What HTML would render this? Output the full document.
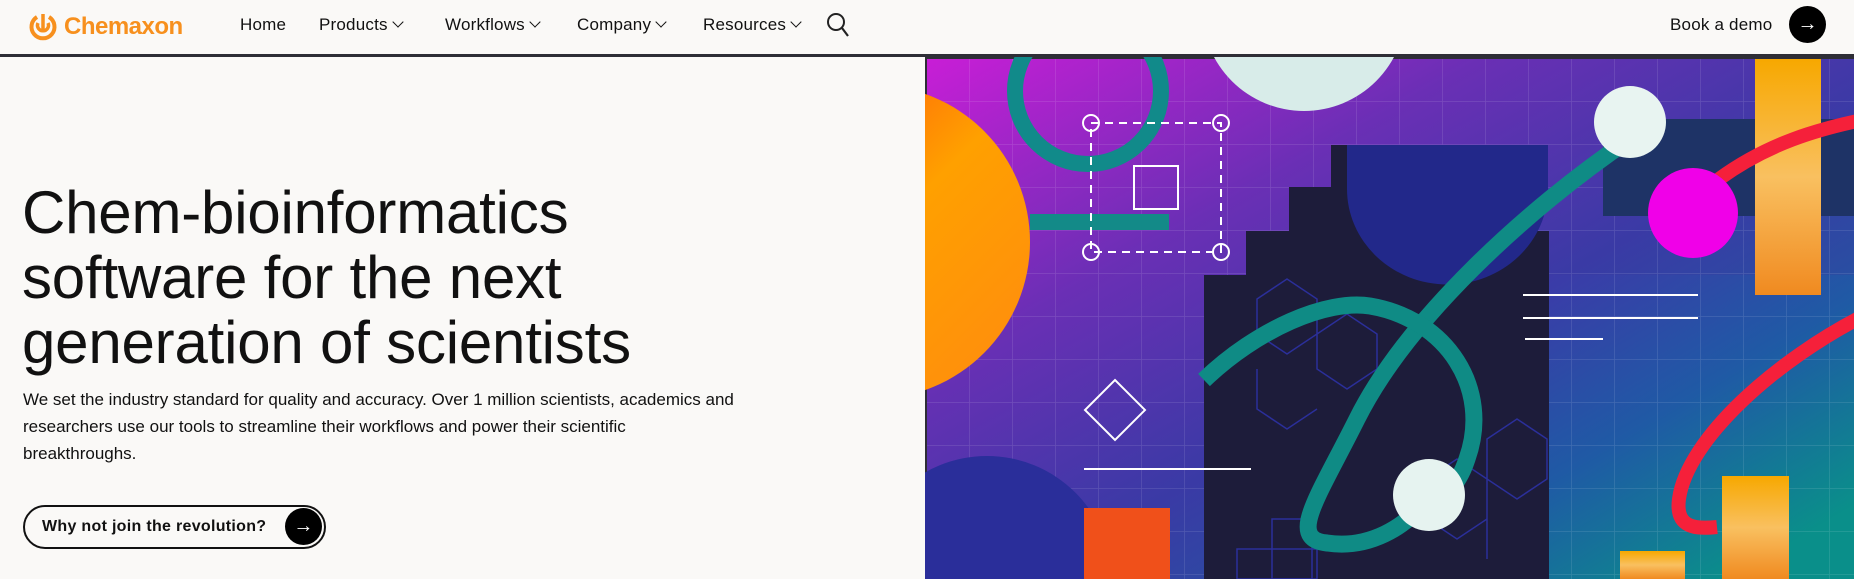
<!DOCTYPE html>
<html><head><meta charset="utf-8"><style>
*{margin:0;padding:0;box-sizing:border-box}
html,body{width:1854px;height:579px;overflow:hidden}
body{background:#faf9f7;font-family:"Liberation Sans",sans-serif;color:#111;position:relative}
.hdr{position:absolute;left:0;top:0;width:1854px;height:57px;background:#faf9f7;border-bottom:3px solid #2e2e36}
.logo{position:absolute;left:26px;top:10px;display:flex;align-items:center;color:#f7901e;font-size:24px;font-weight:bold;letter-spacing:-0.5px}
.nav{position:absolute;top:15px;font-size:17px;color:#111;letter-spacing:0.2px}
.chev{display:inline-block;width:8px;height:8px;border-right:1.8px solid #111;border-bottom:1.8px solid #111;transform:rotate(45deg);margin-left:6px;position:relative;top:-4px}
h1{position:absolute;left:22px;top:180px;font-weight:normal;font-size:60px;line-height:65px;letter-spacing:-0.2px;color:#111}
p{position:absolute;left:23px;top:386px;width:800px;font-size:17px;line-height:27px;color:#111;white-space:nowrap}
.btn{position:absolute;left:23px;top:505px;width:303px;height:44px;border:2.5px solid #111;border-radius:22px;font-size:16px;font-weight:bold;padding:11px 0 0 17px;letter-spacing:0.3px}
.circ{position:absolute;width:37px;height:37px;border-radius:50%;background:#000;color:#fff;text-align:center;font-size:20px;line-height:36px}
</style></head><body>
<div class="hdr">
<div class="logo"><svg width="34" height="34" viewBox="0 0 34 34"><path d="M11 7 A11.5 11.5 0 1 0 23 7" fill="none" stroke="#f7901e" stroke-width="4"/><path d="M17 4 V20 M12 13 A5.5 5.5 0 1 0 22 13" fill="none" stroke="#f7901e" stroke-width="3.5"/></svg><span style="margin-left:4px">Chemaxon</span></div>
<div class="nav" style="left:240px">Home</div>
<div class="nav" style="left:319px">Products<span class="chev"></span></div>
<div class="nav" style="left:445px">Workflows<span class="chev"></span></div>
<div class="nav" style="left:577px">Company<span class="chev"></span></div>
<div class="nav" style="left:703px">Resources<span class="chev"></span></div>
<svg style="position:absolute;left:826px;top:12px" width="24" height="26" viewBox="0 0 24 26"><circle cx="10" cy="10" r="8" fill="none" stroke="#222" stroke-width="2"/><path d="M16 16 L22 24" stroke="#222" stroke-width="2.2"/></svg>
<div class="nav" style="left:1670px">Book a demo</div>
<div class="circ" style="left:1789px;top:6px">&#8594;</div>
</div>
<h1>Chem-bioinformatics<br>software for the next<br>generation of scientists</h1>
<p>We set the industry standard for quality and accuracy. Over 1 million scientists, academics and<br>researchers use our tools to streamline their workflows and power their scientific<br>breakthroughs.</p>
<div class="btn">Why not join the revolution?<div class="circ" style="left:260px;top:1px">&#8594;</div></div>

<svg style="position:absolute;left:925px;top:57px" width="929" height="522" viewBox="-2 -2 929 522">
<defs>
<linearGradient id="bg" x1="0" y1="0" x2="1" y2="1"><stop offset="0" stop-color="#c81ed6"/><stop offset="0.3" stop-color="#6a2fb5"/><stop offset="0.55" stop-color="#3a3aa5"/><stop offset="0.8" stop-color="#1f5aa0"/><stop offset="1" stop-color="#0a8f8a"/></linearGradient>
<linearGradient id="bg2" x1="0" y1="0" x2="0.6" y2="1"><stop offset="0" stop-color="#3c3aa8"/><stop offset="0.5" stop-color="#1f5aa5"/><stop offset="1" stop-color="#0a8f8a"/></linearGradient>
<linearGradient id="og" x1="0" y1="0" x2="1" y2="1"><stop offset="0" stop-color="#ff3a10"/><stop offset="0.5" stop-color="#ffa000"/><stop offset="1" stop-color="#ff8a10"/></linearGradient>
<linearGradient id="ob" x1="0" y1="0" x2="0" y2="1"><stop offset="0" stop-color="#f7a800"/><stop offset="0.5" stop-color="#f9c060"/><stop offset="1" stop-color="#f08a20"/></linearGradient>
<pattern id="grid" width="43" height="43" patternUnits="userSpaceOnUse"><path d="M43 0V43H0" fill="none" stroke="rgba(255,255,255,0.13)" stroke-width="1.5"/></pattern>
</defs>
<rect x="-2" y="-2" width="931" height="524" fill="#2e2e36"/>
<rect x="0" y="0" width="927" height="520" fill="url(#bg)"/>
<rect x="622" y="216" width="305" height="304" fill="url(#bg2)"/>
<rect x="0" y="0" width="927" height="520" fill="url(#grid)"/>
<circle cx="-54" cy="183" r="157" fill="url(#og)"/>
<circle cx="161" cy="32" r="73" fill="none" stroke="#118a8a" stroke-width="16"/>
<circle cx="377" cy="-50" r="102" fill="#d8ece9"/>
<rect x="103" y="155" width="139" height="16" fill="#138a88"/>
<path d="M404 86H537V128H580V172H622V520H277V216H319V172H362V128H404Z" fill="#1d1c3a"/>
<path d="M420 86H621V130A100 95 0 0 1 420 130Z" fill="#22288a"/>
<rect x="676" y="60" width="251" height="97" fill="#1e3366"/>
<rect x="828" y="0" width="66" height="236" fill="url(#ob)"/>
<path d="M792 120 C840 85 890 70 940 60" fill="none" stroke="#f5203a" stroke-width="14"/>
<path d="M940 255 C850 300 760 380 752 440 C748 470 770 470 790 468" fill="none" stroke="#f5203a" stroke-width="14"/>
<circle cx="766" cy="154" r="45" fill="#f000e8"/>
<g fill="none" stroke="#2b2f9a" stroke-width="1.5">
<path d="M330 240 l30 -20 l30 20 v35 l-30 20 l-30 -20z M390 275 l30 -20 l30 20 v35 l-30 20 l-30-20z M330 310 v40 l30 20 l30 -20 M560 380 l30 -20 l30 20 v40 l-30 20 l-30 -20z M500 420 l30-20 l30 20 v40 l-30 20 l-30-20z M560 460 v40"/>
<rect x="345" y="460" width="40" height="60"/><rect x="310" y="490" width="80" height="30"/>
</g>
<path d="M703 80 C600 150 480 260 430 360 C390 440 360 480 400 484 C440 490 480 470 502 436" fill="none" stroke="#0f8b85" stroke-width="17"/>
<path d="M277 321 C330 270 400 240 443 247 C520 260 565 330 540 400 C530 430 515 440 502 436" fill="none" stroke="#0f8b85" stroke-width="17"/>
<circle cx="703" cy="63" r="36" fill="#e8f4f1"/>
<circle cx="502" cy="436" r="36" fill="#e6f3f0"/>
<g fill="none" stroke="#fff" stroke-width="2">
<path d="M164 64H294V193H164Z" stroke-dasharray="8 6"/>
<circle cx="164" cy="64" r="8" fill="none"/><circle cx="294" cy="64" r="8"/><circle cx="164" cy="193" r="8"/><circle cx="294" cy="193" r="8"/>
<rect x="207" y="107" width="44" height="43"/>
<path d="M188 321 L218 351 L188 381 L158 351Z"/>
<path d="M157 410H324 M596 236H771 M596 259H771 M598 280H676"/>
</g>
<circle cx="60" cy="522" r="125" fill="#2a2e9a"/>
<rect x="157" y="449" width="86" height="71" fill="#f0501a"/>
<rect x="795" y="417" width="67" height="103" fill="url(#ob)"/>
<rect x="693" y="492" width="65" height="28" fill="url(#ob)"/>
</svg>
</body></html>
